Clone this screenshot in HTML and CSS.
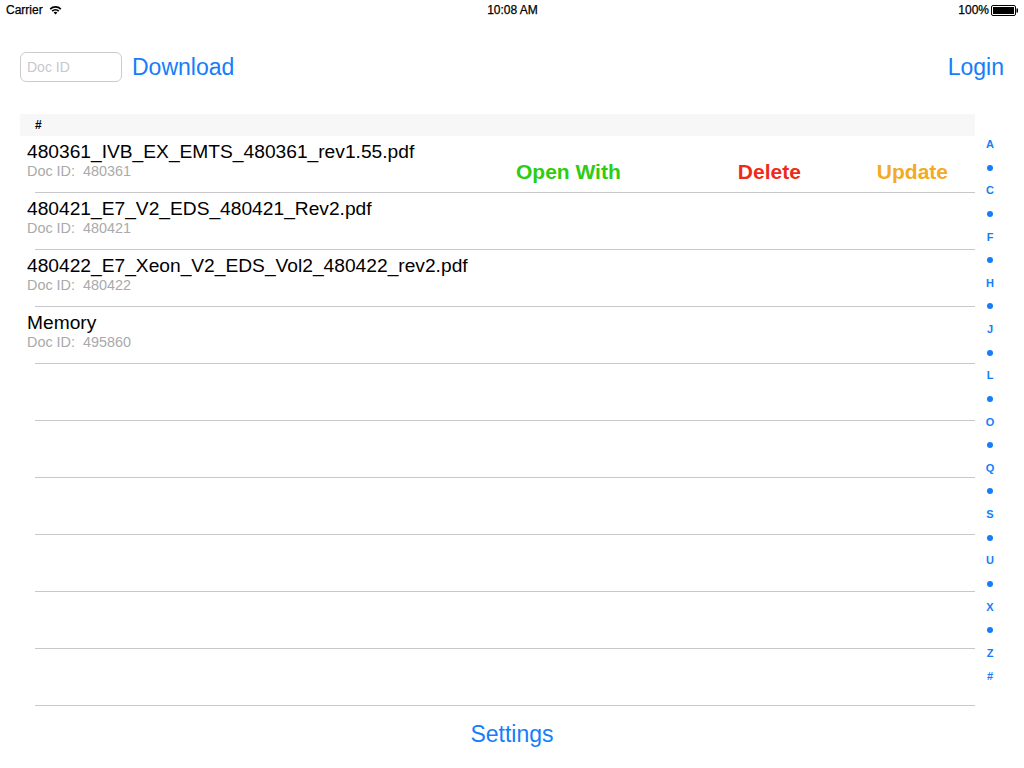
FILE: index.html
```html
<!DOCTYPE html>
<html>
<head>
<meta charset="utf-8">
<link rel="stylesheet" href="styles.css">
</head>
<body>
<div class="status">
  <div class="st-left">Carrier
    <svg class="wifi" width="13" height="10" viewBox="0 0 13 10"><path d="M0.6 3.4 A8.5 8.5 0 0 1 12.4 3.4 L11.2 4.7 A6.7 6.7 0 0 0 1.8 4.7 Z" fill="#000"/><path d="M2.6 5.5 A5.6 5.6 0 0 1 10.4 5.5 L9.2 6.8 A3.8 3.8 0 0 0 3.8 6.8 Z" fill="#000"/><path d="M4.6 7.6 A2.7 2.7 0 0 1 8.4 7.6 L6.5 9.6 Z" fill="#000"/></svg>
  </div>
  <div class="st-mid">10:08 AM</div>
  <div class="st-right">100%
    <svg class="battery" width="28" height="11" viewBox="0 0 28 11"><rect x="0.5" y="0.5" width="24" height="10" rx="1.5" fill="none" stroke="#000"/><rect x="2" y="2" width="21" height="7" fill="#000"/><rect x="25.5" y="3.5" width="1.5" height="4" fill="#000"/></svg>
  </div>
</div>

<div class="toolbar">
  <div class="field">Doc ID</div>
  <span class="link download">Download</span>
  <span class="link login">Login</span>
</div>

<div class="main">
  <div class="table">
    <div class="sec-head">#</div>
    <div class="row">
      <div class="cell">
        <div class="title">480361_IVB_EX_EMTS_480361_rev1.55.pdf</div>
        <div class="sub">Doc ID:  480361</div>
      </div>
      <div class="actions">
        <span class="act open">Open With</span>
        <span class="act del">Delete</span>
        <span class="act upd">Update</span>
      </div>
    </div>
    <div class="row">
      <div class="cell">
        <div class="title">480421_E7_V2_EDS_480421_Rev2.pdf</div>
        <div class="sub">Doc ID:  480421</div>
      </div>
    </div>
    <div class="row">
      <div class="cell">
        <div class="title">480422_E7_Xeon_V2_EDS_Vol2_480422_rev2.pdf</div>
        <div class="sub">Doc ID:  480422</div>
      </div>
    </div>
    <div class="row">
      <div class="cell">
        <div class="title">Memory</div>
        <div class="sub">Doc ID:  495860</div>
      </div>
    </div>
    <div class="row"></div>
    <div class="row"></div>
    <div class="row"></div>
    <div class="row"></div>
    <div class="row"></div>
    <div class="row"></div>
  </div>
  <div class="index">
    <span class="ix">A</span><span class="ix"><i class="dot"></i></span>
    <span class="ix">C</span><span class="ix"><i class="dot"></i></span>
    <span class="ix">F</span><span class="ix"><i class="dot"></i></span>
    <span class="ix">H</span><span class="ix"><i class="dot"></i></span>
    <span class="ix">J</span><span class="ix"><i class="dot"></i></span>
    <span class="ix">L</span><span class="ix"><i class="dot"></i></span>
    <span class="ix">O</span><span class="ix"><i class="dot"></i></span>
    <span class="ix">Q</span><span class="ix"><i class="dot"></i></span>
    <span class="ix">S</span><span class="ix"><i class="dot"></i></span>
    <span class="ix">U</span><span class="ix"><i class="dot"></i></span>
    <span class="ix">X</span><span class="ix"><i class="dot"></i></span>
    <span class="ix">Z</span><span class="ix">#</span>
  </div>
</div>

<div class="footer"><span class="link">Settings</span></div>
</body>
</html>
```
FILE: styles.css
```css
html, body {
  margin: 0;
  padding: 0;
  background: #fff;
}
body {
  width: 1024px;
  height: 768px;
  overflow: hidden;
  font-family: "Liberation Sans", Arial, sans-serif;
  color: #000;
}
.status {
  height: 20px;
  display: grid;
  grid-template-columns: 1fr auto 1fr;
  align-items: center;
  padding: 0 5px 0 6px;
  font-size: 12px;
  box-sizing: border-box;
  -webkit-text-stroke: 0.25px #000;
}
.st-left {
  display: flex;
  align-items: center;
  gap: 6px;
}
.st-mid {
  text-align: center;
}
.st-right {
  display: flex;
  align-items: center;
  justify-content: flex-end;
  gap: 2px;
}
.wifi, .battery {
  display: block;
}
.toolbar {
  height: 94px;
  display: flex;
  align-items: center;
  padding: 0 20px 0 20px;
  box-sizing: border-box;
}
.field {
  width: 102px;
  height: 30px;
  box-sizing: border-box;
  border: 1px solid #cccccc;
  border-radius: 6px;
  padding-left: 6px;
  font-size: 14px;
  line-height: 28px;
  color: #c7c7cd;
}
.link {
  color: #147efb;
  font-size: 23px;
}
.download {
  margin-left: 10px;
}
.login {
  margin-left: auto;
}
.main {
  display: flex;
  height: 592px;
}
.table {
  margin-left: 20px;
  width: 955px;
}
.sec-head {
  height: 22px;
  background: #f7f7f7;
  font-size: 12px;
  font-weight: bold;
  line-height: 22px;
  padding-left: 15px;
}
.row {
  height: 57px;
  box-sizing: border-box;
  display: flex;
  background: linear-gradient(#c8c7cc, #c8c7cc) no-repeat 15px 100% / calc(100% - 15px) 1px;
}
.cell {
  padding: 5px 0 0 7px;
}
.title {
  font-size: 19.2px;
  line-height: 22px;
  white-space: nowrap;
}
.sub {
  font-size: 14.4px;
  line-height: 17px;
  color: #aaaaaa;
  white-space: pre;
}
.actions {
  margin-left: auto;
  display: flex;
  align-items: flex-end;
  padding: 0 27px 9px 0;
}
.act {
  font-size: 21px;
  font-weight: bold;
  line-height: 24px;
}
.open { color: #2ecc12; margin-right: 117px; }
.del { color: #ee2b1b; margin-right: 76px; }
.upd { color: #f2ab22; }
.index {
  width: 30px;
  padding-top: 19px;
  display: flex;
  flex-direction: column;
  align-items: center;
}
.ix {
  height: 23.13px;
  line-height: 23.13px;
  font-size: 11px;
  font-weight: bold;
  color: #147efb;
  display: flex;
  align-items: center;
  justify-content: center;
}
.dot {
  width: 6px;
  height: 6px;
  border-radius: 50%;
  background: #147efb;
  display: block;
}
.footer {
  height: 62px;
  text-align: center;
  padding-top: 15px;
  box-sizing: border-box;
  line-height: 27px;
}
```
